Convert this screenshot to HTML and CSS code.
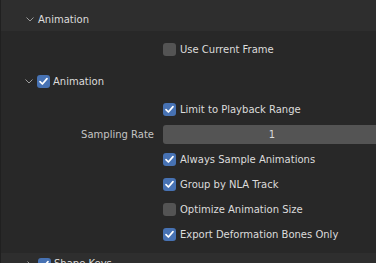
FILE: index.html
```html
<!DOCTYPE html>
<html lang="en">
<head>
  <meta charset="UTF-8">
  <meta name="viewport" content="width=device-width, initial-scale=1">
  <title>Export Animation</title>
  <link rel="stylesheet" href="styles.css">
</head>
<body>
  <main class="editor">
    <section class="panel">
      <header class="panel-head">
        <svg class="chevron" width="8" height="5" viewBox="0 0 8 5"><polyline points="0.5,0.5 4,4 7.5,0.5"/></svg>
        <span>Animation</span>
      </header>
      <div class="panel-body">
        <div class="prop">
          <span class="prop-label"></span>
          <label class="check"><span class="box"></span>Use Current Frame</label>
        </div>

        <div class="sub-head">
          <svg class="chevron" width="8" height="5" viewBox="0 0 8 5"><polyline points="0.5,0.5 4,4 7.5,0.5"/></svg>
          <span class="box on"><svg viewBox="0 0 13 13"><polyline points="3,6.6 5.4,9 10,3.6"/></svg></span>
          <span>Animation</span>
        </div>

        <div class="sub-body">
          <div class="prop">
            <span class="prop-label"></span>
            <label class="check"><span class="box on"><svg viewBox="0 0 13 13"><polyline points="3,6.6 5.4,9 10,3.6"/></svg></span>Limit to Playback Range</label>
          </div>
          <div class="prop">
            <span class="prop-label">Sampling Rate</span>
            <div class="field">1</div>
          </div>
          <div class="prop">
            <span class="prop-label"></span>
            <label class="check"><span class="box on"><svg viewBox="0 0 13 13"><polyline points="3,6.6 5.4,9 10,3.6"/></svg></span>Always Sample Animations</label>
          </div>
          <div class="prop">
            <span class="prop-label"></span>
            <label class="check"><span class="box on"><svg viewBox="0 0 13 13"><polyline points="3,6.6 5.4,9 10,3.6"/></svg></span>Group by NLA Track</label>
          </div>
          <div class="prop">
            <span class="prop-label"></span>
            <label class="check"><span class="box"></span>Optimize Animation Size</label>
          </div>
          <div class="prop">
            <span class="prop-label"></span>
            <label class="check"><span class="box on"><svg viewBox="0 0 13 13"><polyline points="3,6.6 5.4,9 10,3.6"/></svg></span>Export Deformation Bones Only</label>
          </div>
        </div>
      </div>
    </section>

    <section class="panel">
      <header class="panel-head closed">
        <svg class="chevron" width="5" height="8" viewBox="0 0 5 8"><polyline points="0.5,0.5 4,4 0.5,7.5"/></svg>
        <span class="box on"><svg viewBox="0 0 13 13"><polyline points="3,6.6 5.4,9 10,3.6"/></svg></span>
        <span>Shape Keys</span>
      </header>
    </section>
  </main>
</body>
</html>
```

FILE: styles.css
```css
:root {
  --bg: #282828;
  --head: #2e2e2e;
  --widget: #545454;
  --blue: #4772b3;
  --text: #dcdcdc;
  --dim: #c4c4c4;
  --icon: #9c9c9c;
  font-family: 'DejaVu Sans', sans-serif;
  font-size: 10px;
  color: var(--text);
}

* {
  box-sizing: border-box;
}

html,
body {
  margin: 0;
  height: 100%;
  overflow: hidden;
  background: #202020;
}

.editor {
  display: flex;
  flex-direction: column;
  margin-left: 1px;
  min-height: 100%;
  background: var(--bg);
}

.panel-head {
  display: flex;
  align-items: center;
  gap: 4px;
  height: 31px;
  padding: 7px 0 0 25px;
  background: var(--head);
}

.panel-head.closed {
  align-items: flex-start;
  padding-top: 5px;
  gap: 0;
  height: auto;
  min-height: 20px;
}

.panel-head.closed .chevron {
  margin: 3px 6px 0 1px;
}

.panel-head.closed .box {
  margin-right: 3px;
}

.chevron {
  fill: none;
  stroke: var(--icon);
  stroke-width: 1;
  flex: none;
}

.panel-body {
  display: flex;
  flex-direction: column;
  padding: 6px 0 6px;
}

.prop {
  display: grid;
  grid-template-columns: 153px 1fr;
  column-gap: 9px;
  align-items: center;
  height: 25px;
}

.prop-label {
  text-align: right;
  color: var(--dim);
}

.check {
  display: flex;
  align-items: center;
  gap: 4px;
  white-space: nowrap;
}

.box {
  display: block;
  flex: none;
  width: 13px;
  height: 13px;
  border-radius: 3px;
  background: var(--widget);
}

.box.on {
  background: var(--blue);
}

.box svg {
  display: block;
  width: 13px;
  height: 13px;
  fill: none;
  stroke: #fff;
  stroke-width: 1.7;
  stroke-linecap: round;
  stroke-linejoin: round;
}

.sub-head {
  display: flex;
  align-items: center;
  height: 26px;
  margin-top: 6px;
  padding-left: 24px;
}

.sub-head .chevron {
  margin-right: 4px;
}

.sub-head .box {
  margin-right: 3px;
}

.sub-body {
  display: flex;
  flex-direction: column;
  padding-top: 3px;
}

.field {
  width: 218px;
  height: 19px;
  line-height: 19px;
  border-radius: 3px;
  background: var(--widget);
  text-align: center;
  color: var(--text);
}
```
